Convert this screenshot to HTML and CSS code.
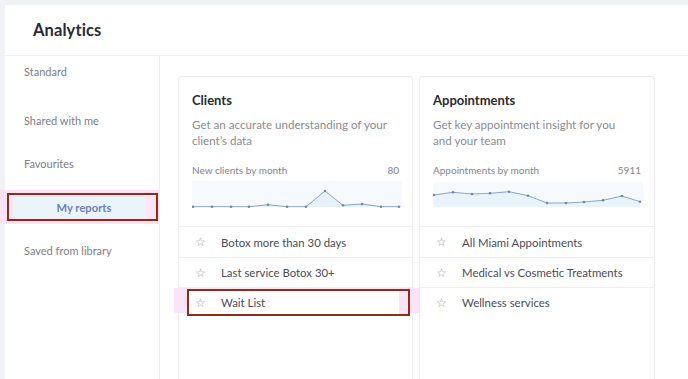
FILE: index.html
```html
<!DOCTYPE html>
<html>
<head>
<meta charset="utf-8">
<link rel="stylesheet" href="styles.css">
</head>
<body>
<div class="panel">
  <header class="header"><h1 class="title">Analytics</h1></header>
  <div class="body">
    <nav class="sidebar">
      <div class="nav-item nav-item--first">Standard</div>
      <div class="nav-item">Shared with me</div>
      <div class="nav-item">Favourites</div>
      <div class="nav-active">
        <div class="nav-box"><div class="nav-inner">My reports</div></div>
      </div>
      <div class="nav-item">Saved from library</div>
    </nav>
    <main class="main">
      <section class="card">
        <div class="card-head">
          <h2 class="card-title">Clients</h2>
          <p class="card-desc">Get an accurate understanding of your client’s data</p>
          <div class="chart-label"><span>New clients by month</span><span>80</span></div>
          <svg class="chart" viewBox="0 0 210 30" width="210" height="30">
            <rect x="0" y="2" width="210" height="26" fill="#f6fafd"/>
            <polygon fill="#e6f1fa" points="1,27.7 20,27.7 39,27.7 57,27.7 76,25.7 95,27.7 114,27.7 133,12 151,26.3 170,25 189,27.7 207,27.7 207,28 1,28"/>
            <polyline fill="none" stroke="#8fa3cd" stroke-width="1" points="1,27.7 20,27.7 39,27.7 57,27.7 76,25.7 95,27.7 114,27.7 133,12 151,26.3 170,25 189,27.7 207,27.7"/>
            <g fill="#6e86ba">
              <circle cx="1" cy="27.7" r="1.3"/><circle cx="20" cy="27.7" r="1.3"/><circle cx="39" cy="27.7" r="1.3"/><circle cx="57" cy="27.7" r="1.3"/><circle cx="76" cy="25.7" r="1.3"/><circle cx="95" cy="27.7" r="1.3"/><circle cx="114" cy="27.7" r="1.3"/><circle cx="133" cy="12" r="1.3"/><circle cx="151" cy="26.3" r="1.3"/><circle cx="170" cy="25" r="1.3"/><circle cx="189" cy="27.7" r="1.3"/><circle cx="207" cy="27.7" r="1.3"/>
            </g>
          </svg>
        </div>
        <ul class="list">
          <li class="row"><span class="star">☆</span>Botox more than 30 days</li>
          <li class="row"><span class="star">☆</span>Last service Botox 30+</li>
          <li class="row row--marked"><span class="star">☆</span>Wait List</li>
        </ul>
      </section>
      <section class="card">
        <div class="card-head">
          <h2 class="card-title">Appointments</h2>
          <p class="card-desc">Get key appointment insight for you and your team</p>
          <div class="chart-label"><span>Appointments by month</span><span>5911</span></div>
          <svg class="chart" viewBox="0 0 210 30" width="210" height="30">
            <rect x="0" y="3" width="210" height="25" fill="#f6fafd"/>
            <polygon fill="#e9f3fb" points="1,16 20,13.3 39,15 57,14.3 76,12.7 95,16.7 114,24 133,24 151,23 170,21.3 189,17 207,22.7 207,28 1,28"/>
            <polyline fill="none" stroke="#8fa3cd" stroke-width="1" points="1,16 20,13.3 39,15 57,14.3 76,12.7 95,16.7 114,24 133,24 151,23 170,21.3 189,17 207,22.7"/>
            <g fill="#6e86ba">
              <circle cx="1" cy="16" r="1.3"/><circle cx="20" cy="13.3" r="1.3"/><circle cx="39" cy="15" r="1.3"/><circle cx="57" cy="14.3" r="1.3"/><circle cx="76" cy="12.7" r="1.3"/><circle cx="95" cy="16.7" r="1.3"/><circle cx="114" cy="24" r="1.3"/><circle cx="133" cy="24" r="1.3"/><circle cx="151" cy="23" r="1.3"/><circle cx="170" cy="21.3" r="1.3"/><circle cx="189" cy="17" r="1.3"/><circle cx="207" cy="22.7" r="1.3"/>
            </g>
          </svg>
        </div>
        <ul class="list">
          <li class="row"><span class="star">☆</span>All Miami Appointments</li>
          <li class="row"><span class="star">☆</span>Medical vs Cosmetic Treatments</li>
          <li class="row"><span class="star">☆</span>Wellness services</li>
        </ul>
      </section>
    </main>
  </div>
</div>
</body>
</html>
```

FILE: styles.css
```css
* { box-sizing: border-box; }
html, body { margin: 0; padding: 0; }
body {
  background: #f1f2f6;
  font-family: "Lato", "Liberation Sans", sans-serif;
  color: #2b2c34;
  width: 688px;
  height: 379px;
  overflow: hidden;
}
.panel {
  margin: 5px 0 0 5px;
  background: #fff;
  height: 374px;
}
.header {
  height: 51px;
  border-bottom: 1px solid #efeff2;
  display: flex;
  align-items: center;
  padding-left: 28px;
}
.title {
  margin: 0;
  font-size: 16.5px;
  font-weight: 700;
  color: #2a2b33;
  letter-spacing: 0.1px;
}
.body {
  display: flex;
  height: 323px;
}
.sidebar {
  width: 155px;
  border-right: 1px solid #efeff2;
  padding-top: 7px;
}
.nav-item {
  height: 43px;
  display: flex;
  align-items: center;
  padding-left: 19px;
  font-size: 11px;
  color: #7c7e88;
}
.nav-item--first {
  height: 16px;
  margin-bottom: 20px;
}
.nav-active {
  background: #fde2f6;
  padding: 3px 1px 3px 7px;
  margin: 5px 0 5px -5px;
}
.nav-box {
  border: 2px solid #8e2d17;
  background: #fde6f8;
  padding: 2px 10px 2px 5px;
}
.nav-inner {
  background: #e9f5fb;
  height: 20px;
  display: flex;
  align-items: center;
  justify-content: center;
  padding-left: 8px;
  font-size: 11.2px;
  font-weight: 700;
  color: #6f80b8;
}
.main {
  flex: 1;
  display: flex;
  gap: 6px;
  padding: 20px 0 0 18px;
  align-items: flex-start;
}
.card {
  border: 1px solid #ececef;
  border-radius: 3px;
  height: 320px;
}
.card:first-child { width: 235px; }
.card:last-child { width: 236px; }
.card-head {
  padding: 15px 12px 17px 13px;
  border-bottom: 1px solid #efeff2;
}
.card-title {
  margin: 0;
  font-size: 13px;
  font-weight: 700;
  color: #2a2b33;
  line-height: 16px;
}
.card-desc {
  margin: 9px 0 0;
  padding-right: 11px;
  font-size: 11.6px;
  line-height: 16px;
  color: #8b8c95;
}
.chart-label {
  display: flex;
  justify-content: space-between;
  margin-top: 15px;
  font-size: 10px;
  color: #85868f;
  padding-right: 1px;
}
.chart {
  display: block;
  margin-top: 3px;
}
.list {
  list-style: none;
  margin: 0;
  padding: 0;
}
.row {
  height: 30px;
  display: flex;
  align-items: center;
  font-size: 11.4px;
  color: #4b4c56;
  border-top: 1px solid #efeff2;
  position: relative;
}
.row:first-child { border-top: none; }
.star {
  width: 42px;
  padding-left: 16px;
  font-size: 12px;
  color: #9a9ba3;
  font-family: "DejaVu Sans", sans-serif;
}
.row--marked { z-index: 0; }
.row--marked::before {
  content: "";
  position: absolute;
  left: -5px;
  right: -8px;
  top: 0;
  bottom: 4px;
  background: #fde3f7;
  z-index: -2;
}
.row--marked::after {
  content: "";
  position: absolute;
  left: 8px;
  right: 2px;
  top: 1px;
  bottom: 1px;
  border: 2px solid #8e2d17;
  background: linear-gradient(to right, #fff 0, #fff 96%, #fde3f7 96%);
  z-index: -1;
}
```
